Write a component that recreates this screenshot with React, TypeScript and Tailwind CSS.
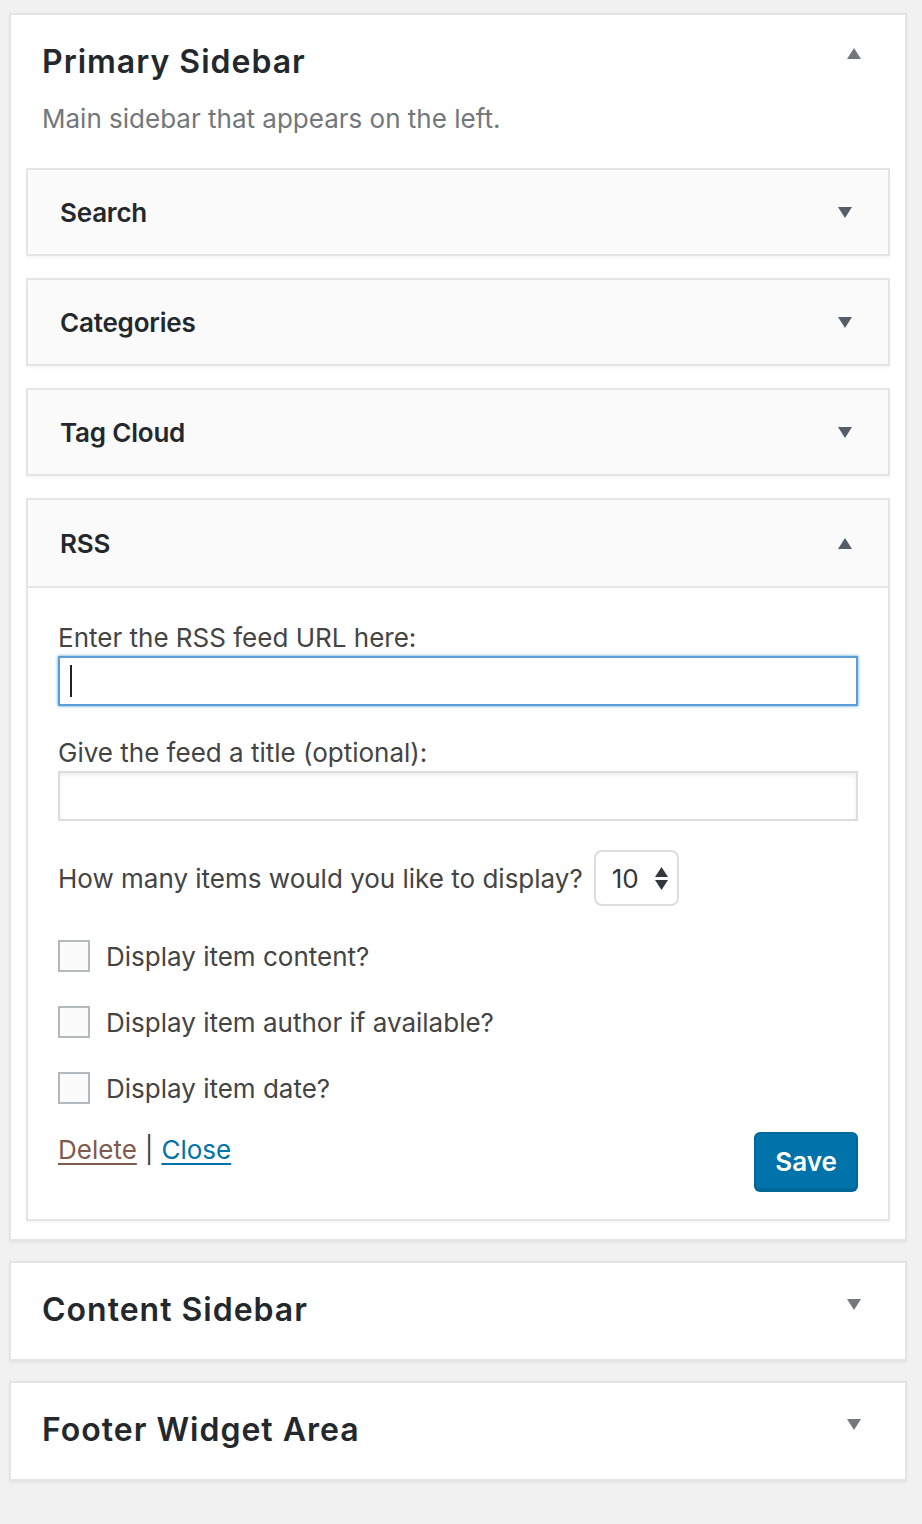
import { useState } from "react";

const font = { fontFamily: "Inter, 'Noto Sans', 'Liberation Sans', sans-serif" };

function Caret({ up = false, className = "" }: { up?: boolean; className?: string }) {
  return (
    <svg width="14" height="11" viewBox="0 0 14 11" className={className}>
      {up ? <path d="M7 0 L14 11 L0 11 Z" fill="currentColor" /> : <path d="M0 0 L14 0 L7 11 Z" fill="currentColor" />}
    </svg>
  );
}

function WidgetHeader({ title, open = false }: { title: string; open?: boolean }) {
  return (
    <div className={`${open ? "h-[86px]" : "h-[84px]"} flex items-center justify-between pl-[32px] pr-[36px] bg-[#fafafa]`}>
      <h3 className="text-[26px] font-semibold text-[#23282d] tracking-[-0.2px]">{title}</h3>
      <Caret up={open} className="text-[#555d66]" />
    </div>
  );
}

function ClosedWidget({ title }: { title: string }) {
  return (
    <div className="border-2 border-[#e5e5e5] shadow-[0_2px_2px_rgba(0,0,0,0.04)]">
      <WidgetHeader title={title} />
    </div>
  );
}

function Check({ label }: { label: string }) {
  const [on, setOn] = useState(false);
  return (
    <label className="flex items-center gap-[16px] h-[32px] cursor-pointer">
      <span
        onClick={() => setOn(!on)}
        className="w-[32px] h-[32px] border-2 border-[#b4b9be] bg-[#fbfbfb] shrink-0 flex items-center justify-center text-[#1e8cbe]"
      >
        {on ? "✓" : null}
      </span>
      <span className="text-[26px] text-[#444]">{label}</span>
    </label>
  );
}

function SidebarCard({ title, children }: { title: string; children?: React.ReactNode }) {
  const open = !!children;
  return (
    <div className="bg-white border-2 border-[#e5e5e5] shadow-[0_2px_2px_rgba(0,0,0,0.05)]">
      <div className="flex items-start justify-between pl-[31px] pr-[44px] pt-[28px] pb-[30px]">
        <h2 className="text-[32px] leading-[38px] font-semibold text-[#23282d] tracking-[1px]">{title}</h2>
        <Caret up={open} className={`${open ? "mt-[5px]" : "mt-[8px]"} text-[#72777c]`} />
      </div>
      {children}
    </div>
  );
}

export default function App() {
  return (
    <div className="min-h-[1524px] bg-[#f1f1f1] pt-[13px] pl-[9px] pr-[15px] flex flex-col gap-[20px]" style={font}>
      <SidebarCard title="Primary Sidebar">
        <p className="-mt-[10px] px-[31px] text-[26px] leading-[36px] text-[#72777c]">Main sidebar that appears on the left.</p>
        <div className="flex flex-col gap-[22px] px-[15px] pt-[31px] pb-[18px]">
          <ClosedWidget title="Search" />
          <ClosedWidget title="Categories" />
          <ClosedWidget title="Tag Cloud" />
          <div className="border-2 border-[#e5e5e5] shadow-[0_2px_2px_rgba(0,0,0,0.04)]">
            <WidgetHeader title="RSS" open />
            <div className="border-t-2 border-[#e5e5e5] bg-white px-[30px] pt-[32px] pb-[29px] flex flex-col">
              <label className="text-[26px] leading-[36px] text-[#444]">Enter the RSS feed URL here:</label>
              <div className="h-[50px] border-2 border-[#5b9dd9] shadow-[0_0_3px_rgba(30,140,190,0.8)] flex items-center pl-[10px]">
                <span className="w-[2px] h-[32px] bg-[#222]" />
              </div>
              <label className="mt-[29px] text-[26px] leading-[36px] text-[#444]">Give the feed a title (optional):</label>
              <div className="h-[50px] border-2 border-[#ddd] shadow-[inset_0_2px_4px_rgba(0,0,0,0.07)]" />
              <div className="mt-[29px] flex items-center gap-[11px]">
                <span className="text-[26px] text-[#444]">How many items would you like to display?</span>
                <div className="h-[56px] w-[85px] border-2 border-[#ddd] rounded-[8px] flex items-center pl-[16px] gap-[16px]">
                  <span className="text-[26px] text-[#32373c]">10</span>
                  <span className="flex flex-col gap-[3px] text-[#32373c]">
                    <svg width="13" height="10" viewBox="0 0 13 10"><path d="M6.5 0 L13 10 L0 10 Z" fill="currentColor" /></svg>
                    <svg width="13" height="10" viewBox="0 0 13 10"><path d="M0 0 L13 0 L6.5 10 Z" fill="currentColor" /></svg>
                  </span>
                </div>
              </div>
              <div className="mt-[34px] flex flex-col gap-[34px]">
                <Check label="Display item content?" />
                <Check label="Display item author if available?" />
                <Check label="Display item date?" />
              </div>
              <div className="mt-[28px] flex items-start justify-between">
                <div className="text-[26px] leading-[36px] text-[#444]">
                  <a href="#" className="text-[#7f5a4e] underline underline-offset-[4px]">Delete</a>
                  <span className="mx-[8px]">|</span>
                  <a href="#" className="text-[#0073aa] underline underline-offset-[4px]">Close</a>
                </div>
                <button
                  type="button"
                  className="h-[58px] w-[104px] rounded-[6px] bg-[#0073aa] border-2 border-[#006799] text-white text-[26px] font-semibold shadow-[0_2px_0_#006799]"
                >
                  Save
                </button>
              </div>
            </div>
          </div>
        </div>
      </SidebarCard>
      <SidebarCard title="Content Sidebar" />
      <SidebarCard title="Footer Widget Area" />
    </div>
  );
}
